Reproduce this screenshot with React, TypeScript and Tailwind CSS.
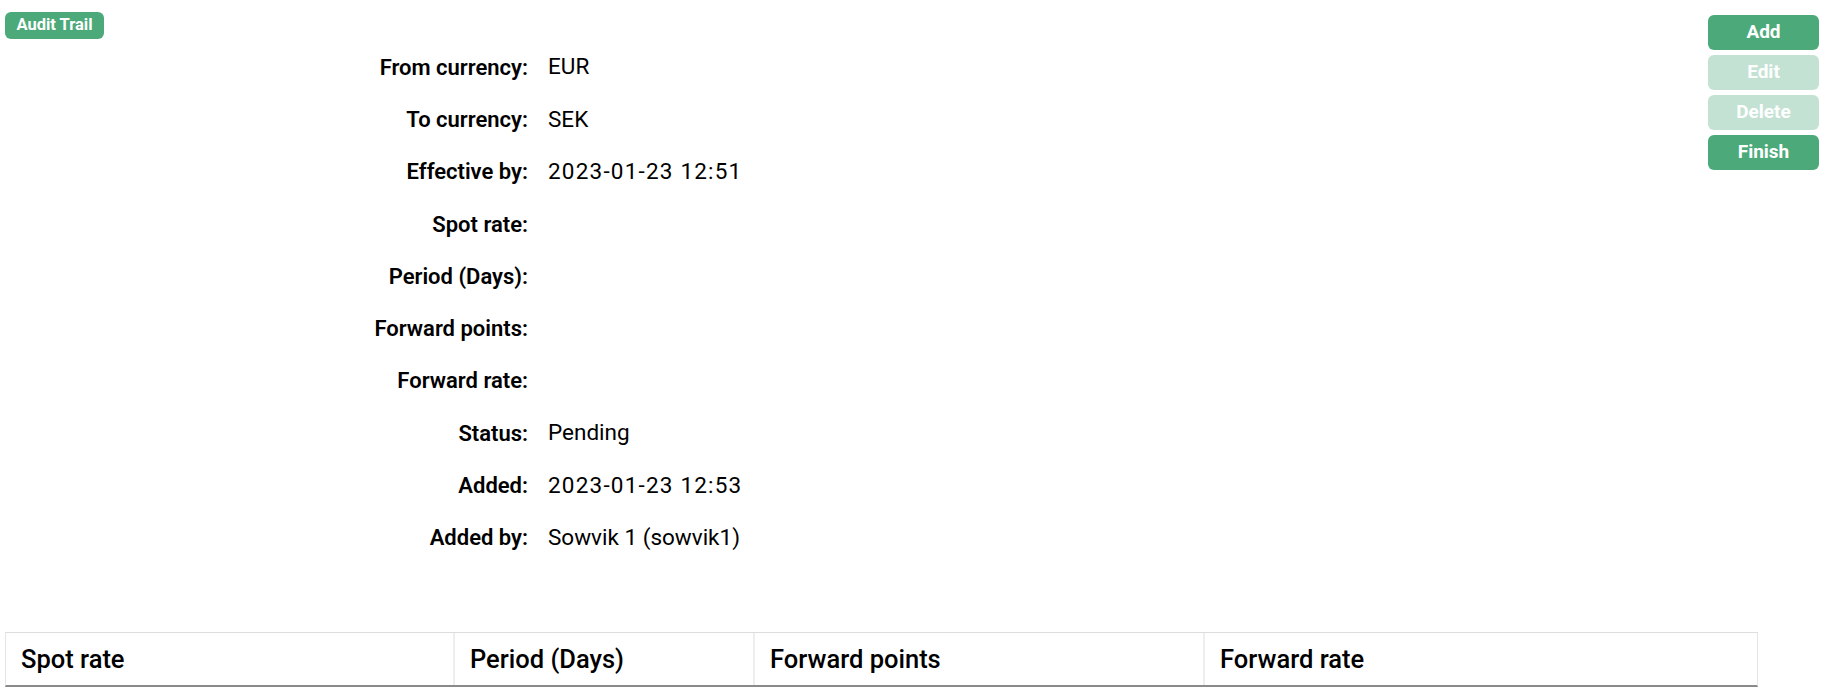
import React from "react";

const rows: [string, string, boolean][] = [
  ["From currency:", "EUR", false],
  ["To currency:", "SEK", false],
  ["Effective by:", "2023-01-23 12:51", true],
  ["Spot rate:", "", false],
  ["Period (Days):", "", false],
  ["Forward points:", "", false],
  ["Forward rate:", "", false],
  ["Status:", "Pending", false],
  ["Added:", "2023-01-23 12:53", true],
  ["Added by:", "Sowvik 1 (sowvik1)", false],
];

export default function App() {
  return (
    <div
      className="relative min-h-[696px] w-[1830px] bg-white text-black"
      style={{ fontFamily: "Roboto, 'Open Sans', sans-serif" }}
    >
      <div className="flex justify-between">
        <div className="flex flex-col">
          <div className="pl-[5px] pt-[12px]">
            <span className="flex h-[27px] w-[99px] items-center justify-center rounded-[6px] bg-[#4caa7a] text-[16.5px] font-bold text-white">
              Audit Trail
            </span>
          </div>
          <div className="mt-[2px] flex flex-col">
            {rows.map(([l, v, d]) => (
              <div key={l} className="flex h-[52.3px] items-center">
                <div className="w-[528px] text-right text-[22px] font-semibold">{l}</div>
                <div className={d ? "pl-[20px] text-[22.5px] tracking-[1.2px]" : "pl-[20px] text-[22.5px]"}>{v}</div>
              </div>
            ))}
          </div>
        </div>
        <div className="mr-[11px] mt-[15px] flex w-[111px] flex-col gap-[5px]">
          <button className="h-[35px] rounded-[6px] bg-[#4caa7a] text-[19px] font-bold text-white">Add</button>
          <button className="h-[35px] rounded-[6px] bg-[#c3e2d3] text-[19px] font-bold text-white">Edit</button>
          <button className="h-[35px] rounded-[6px] bg-[#c3e2d3] text-[19px] font-bold text-white">Delete</button>
          <button className="h-[35px] rounded-[6px] bg-[#4caa7a] text-[19px] font-bold text-white">Finish</button>
        </div>
      </div>
      <div className="ml-[5px] mt-[68px] w-[1753px]">
        <div className="flex h-[55px] border-x border-t border-b-2 border-x-[#e5e5e5] border-t-[#dddddd] border-b-[#8a8a8a]">
          <div className="flex w-[449px] items-center border-r-2 border-[#eeeeee] pl-[15px] text-[25.5px] font-medium">Spot rate</div>
          <div className="flex w-[300px] items-center border-r-2 border-[#eeeeee] pl-[15px] text-[25.5px] font-medium">Period (Days)</div>
          <div className="flex w-[450px] items-center border-r-2 border-[#eeeeee] pl-[15px] text-[25.5px] font-medium">Forward points</div>
          <div className="flex flex-1 items-center pl-[15px] text-[25.5px] font-medium">Forward rate</div>
        </div>
      </div>
    </div>
  );
}
